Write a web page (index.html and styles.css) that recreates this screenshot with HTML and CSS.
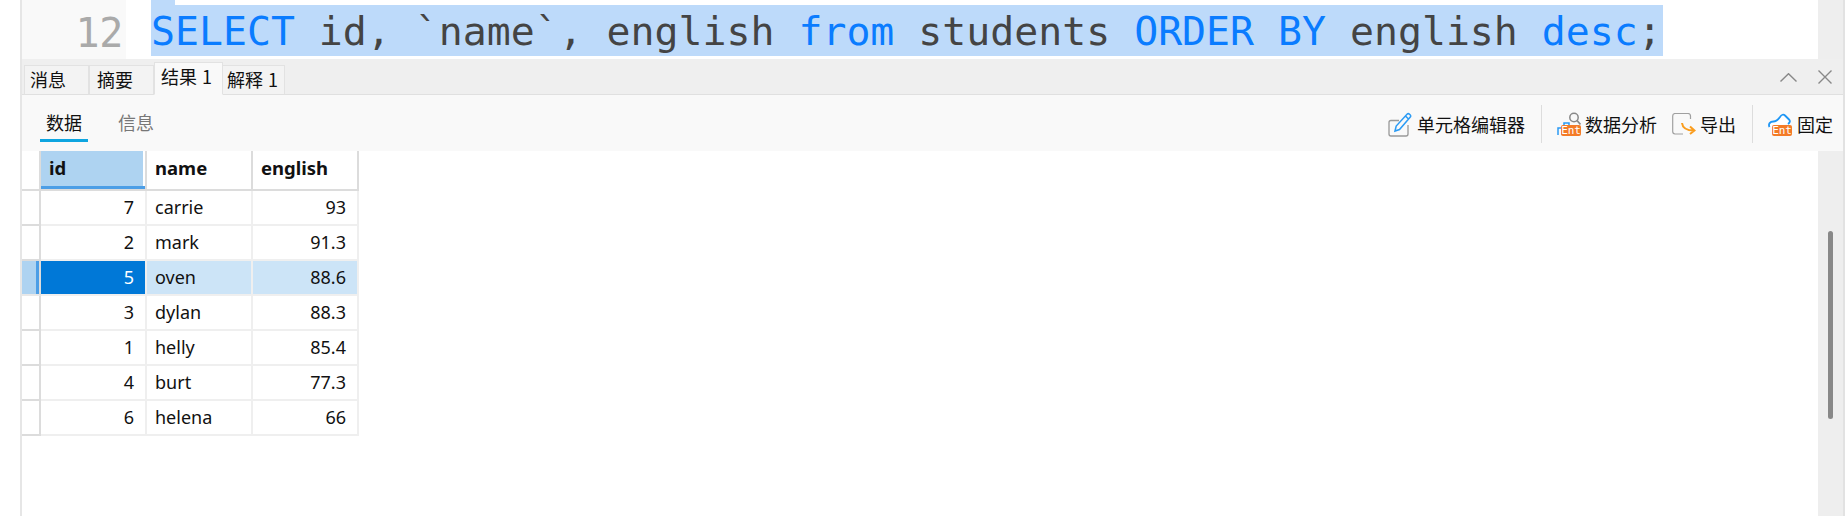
FILE: index.html
```html
<!DOCTYPE html>
<html lang="zh-CN">
<head>
<meta charset="utf-8">
<title>结果 1</title>
<link rel="stylesheet" href="styles.css">
</head>
<body>
<div class="frame">
  <section class="editor">
    <div class="gutter">12</div>
    <div class="code-wrap">
      <div class="sel-stub"></div>
      <div class="code"><span class="kw">SELECT</span> id, `name`, english <span class="kw">from</span> students <span class="kw">ORDER BY</span> english <span class="kw">desc</span>;</div>
    </div>
    <div class="track"></div>
  </section>

  <nav class="tabs">
    <div class="tab">消息</div>
    <div class="tab">摘要</div>
    <div class="tab tab-active">结果 1</div>
    <div class="tab tab-last">解释 1</div>
    <div class="win-btns">
      <svg class="chev" viewBox="0 0 17 9" width="17" height="9"><path d="M.5 8.5 8.5.7l8 7.8" fill="none" stroke="#888" stroke-width="1.4"/></svg>
      <svg class="close" viewBox="0 0 14 14" width="14" height="14"><path d="M.5.5l13 13M13.500.5l-13 13" fill="none" stroke="#888" stroke-width="1.4"/></svg>
    </div>
  </nav>

  <div class="toolbar">
    <div class="views">
      <span class="view view-active">数据</span>
      <span class="view">信息</span>
    </div>
    <div class="actions">
      <div class="action act-edit">
        <svg class="ico" viewBox="0 0 24 25" width="24" height="25">
          <path d="M11 8.500H3a2 2 0 0 0-2 2V22a2 2 0 0 0 2 2h15a2 2 0 0 0 2-2v-9" fill="none" stroke="#999" stroke-width="1.300"/>
          <path d="M7 19l1.200-5L19 2.200a1.800 1.800 0 0 1 2.500 0l.6.6a1.800 1.800 0 0 1 0 2.500L11.500 17.500z M17.500 4l3 3" fill="none" stroke="#2b9bf4" stroke-width="1.500"/>
        </svg>
        <span>单元格编辑器</span>
      </div>
      <i class="sep"></i>
      <div class="action act-analysis">
        <span class="ico-wrap">
          <svg class="ico" viewBox="0 0 24 24" width="24" height="24">
            <path d="M1 23v-7h4v7M7 23V11h5v12" fill="none" stroke="#2b9bf4" stroke-width="1.500"/>
            <circle cx="17" cy="5.500" r="4.200" fill="none" stroke="#888" stroke-width="1.500"/>
            <path d="M20 8.500l3.500 4" stroke="#888" stroke-width="1.800"/>
          </svg>
          <b class="ent">Ent</b>
        </span>
        <span>数据分析</span>
      </div>
      <div class="action act-export">
        <svg class="ico" viewBox="0 0 24 22" width="24" height="22">
          <path d="M18.500 6V3a2.500 2.500 0 0 0-2.500-2.500H3A2.500 2.500 0 0 0 .7 3v15.500A2.500 2.500 0 0 0 3 21h8" fill="none" stroke="#a0a0a0" stroke-width="1.200"/>
          <path d="M10 10c.5 5 4 7.500 12 7.500M18 13.500l4.500 4-4.500 3.500" fill="none" stroke="#fa9d1e" stroke-width="2"/>
        </svg>
        <span>导出</span>
      </div>
      <i class="sep sep-2"></i>
      <div class="action act-pin">
        <span class="ico-wrap">
          <svg class="ico" viewBox="0 0 23 24" width="23" height="24">
            <path d="M1.500 15c-1.500-3 .5-5.500 4-5.500 2.500 0 4-1 6.500-4.500 1.500-2.500 3.500-3 5-1.500l4 4c1.500 1.500 1 3-1 4.500" fill="#fff" stroke="#1e96f5" stroke-width="1.800"/>
          </svg>
          <b class="ent">Ent</b>
        </span>
        <span>固定</span>
      </div>
    </div>
  </div>

  <section class="results">
    <div class="grid">
      <div class="c mk"></div>
      <div class="c th th-sel">id</div>
      <div class="c th">name</div>
      <div class="c th">english</div>

      <div class="c mk"></div><div class="c num">7</div><div class="c">carrie</div><div class="c num">93</div>
      <div class="c mk"></div><div class="c num">2</div><div class="c">mark</div><div class="c num">91.3</div>
      <div class="c mk mk-sel"></div><div class="c num cur">5</div><div class="c sel">oven</div><div class="c num sel">88.6</div>
      <div class="c mk"></div><div class="c num">3</div><div class="c">dylan</div><div class="c num">88.3</div>
      <div class="c mk"></div><div class="c num">1</div><div class="c">helly</div><div class="c num">85.4</div>
      <div class="c mk"></div><div class="c num">4</div><div class="c">burt</div><div class="c num">77.3</div>
      <div class="c mk"></div><div class="c num">6</div><div class="c">helena</div><div class="c num">66</div>
    </div>
    <div class="track track-results"><div class="thumb"></div></div>
  </section>
</div>
</body>
</html>
```
FILE: styles.css
```css
* { box-sizing: border-box; }
html, body { margin: 0; padding: 0; height: 100%; background: #fff; overflow: hidden; }
body {
  font-family: "Noto Sans CJK SC", "Noto Sans", sans-serif;
  color: #111;
}
.frame {
  margin-left: 20px;
  width: 1825px;
  height: 516px;
  border-left: 2px solid #e6e6e6;
  border-right: 2px solid #e2e2e2;
  display: flex;
  flex-direction: column;
}

/* editor */
.editor { height: 59px; display: flex; flex: none; }
.gutter {
  width: 104px;
  background: #f9f9f9;
  color: #aaa;
  font: 40px/66px "DejaVu Sans Mono", monospace;
  text-align: right;
  padding-right: 3px;
  letter-spacing: -.3px;
}
.code-wrap { flex: 1; padding-left: 25px; min-width: 0; }
.sel-stub { width: 24px; height: 5px; background: #bddafa; }
.code {
  width: 1512px;
  height: 51px;
  background: #bddafa;
  color: #444;
  font: 39.85px/53px "DejaVu Sans Mono", monospace;
  white-space: pre;
}
.kw { color: #0a7cff; }
.track { width: 25px; background: #eee; flex: none; }

/* tabs */
.tabs {
  height: 36px;
  flex: none;
  background: #efefef;
  border-bottom: 1px solid #e0e0e0;
  display: flex;
  align-items: flex-end;
  padding-left: 2px;
  font-size: 18px;
  word-spacing: 1px;
}
.tab {
  height: 30px;
  width: 65px;
  margin-bottom: -1px;
  background: #f3f3f3;
  border: 1px solid #e2e2e2;
  border-bottom-color: #e0e0e0;
  line-height: 27px;
  padding-left: 5px;
  white-space: nowrap;
}
.tab-active {
  height: 33px;
  width: 69px;
  background: #f9f9f9;
  border-bottom-color: #f9f9f9;
  padding-left: 6px;
  line-height: 26px;
}
.tab:nth-child(2) { padding-left: 7px; }
.tab-last { width: 62px; padding-left: 4px; border-left: 0; }
.win-btns {
  margin-left: auto;
  align-self: center;
  display: flex;
  align-items: center;
  gap: 21px;
  padding-right: 11px;
  margin-top: 1px;
}
.chev, .close { display: block; }

/* toolbar */
.toolbar {
  height: 56px;
  flex: none;
  background: #f9f9f9;
  display: flex;
  justify-content: space-between;
  align-items: stretch;
  font-size: 18px;
}
.views { display: flex; padding-left: 18px; }
.view {
  width: 48px;
  height: 47px;
  text-align: center;
  line-height: 55px;
  color: #777;
  margin-right: 24px;
}
.view-active { color: #111; border-bottom: 3px solid #0ea5e0; }
.actions { display: flex; align-items: center; padding-right: 10px; }
.action { display: flex; align-items: center; height: 100%; white-space: nowrap; line-height: 24px; padding-top: 2px; }
.ico { display: block; flex: none; }
.ico-wrap { position: relative; width: 24px; height: 24px; display: block; flex: none; }
.ent {
  position: absolute;
  right: 0;
  bottom: 0;
  width: 20px;
  height: 11px;
  background: #f47b27;
  border-radius: 2px;
  color: #fff;
  font: 400 11px/11px "DejaVu Sans Mono", monospace;
  letter-spacing: -.1px;
  text-align: center;
}
.act-edit { gap: 5px; }
.act-analysis { gap: 4px; }
.act-export { gap: 4px; margin-left: 15px; }
.act-pin { gap: 5px; }
.sep { display: block; width: 1px; height: 38px; background: #ddd; margin: 2px 15px 0 16px; }
.sep-2 { margin: 2px 15px 0 16px; }

/* results */
.results { flex: 1; display: flex; min-height: 0; }
.grid {
  flex: 1;
  display: grid;
  grid-template-columns: 19px 106px 106px 106px;
  grid-template-rows: 40px repeat(7, 35px);
  align-content: start;
  justify-content: start;
  font: 18px/32px "Noto Sans", "Noto Sans CJK SC", sans-serif;
  color: #111;
}
.c {
  border-right: 2px solid #efefef;
  border-bottom: 2px solid #efefef;
  padding: 0 11px 0 8px;
  white-space: nowrap;
}
.mk { border-right-color: #dcdcdc; border-bottom-color: #dcdcdc; padding: 0; }
.mk-sel { background: #aed3f1; box-shadow: inset -3px 0 #4c9ee6; border-bottom-color: #e8e8e8; background-clip: padding-box; }
.th {
  border-right-color: #dcdcdc;
  border-bottom-color: #dcdcdc;
  font-weight: 700;
  font-size: 18.500px;
  line-height: 34px;
}
.th-sel { background: #aed3f1; background-clip: padding-box; box-shadow: inset 0 -3px #4c9ee6, inset -2px 0 #fff; }
.num { text-align: right; }
.cur { background: #0078d7; background-clip: padding-box; color: #fff; }
.sel { background: #cce4f7; background-clip: padding-box; }

.track-results { position: relative; }
.thumb {
  position: absolute;
  left: 10px;
  top: 80px;
  width: 5px;
  height: 188px;
  border-radius: 3px;
  background: #888;
}
```
